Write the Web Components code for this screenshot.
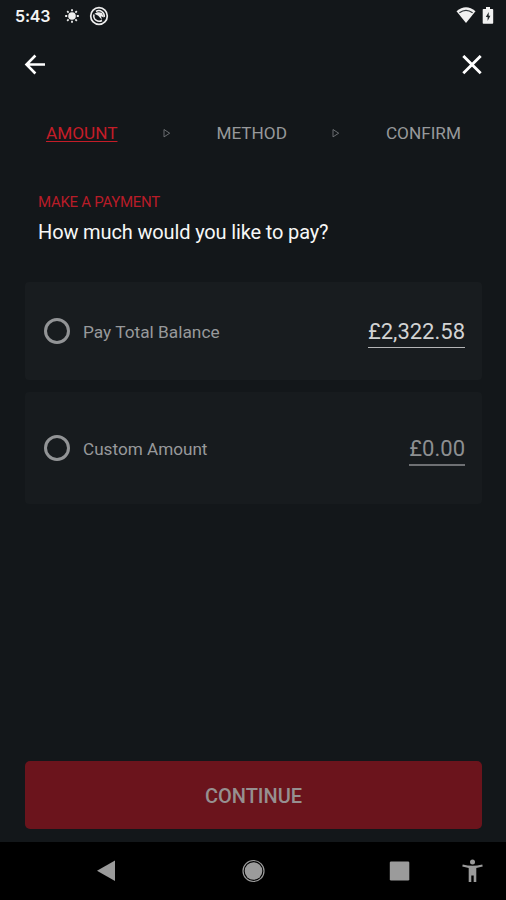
<!DOCTYPE html>
<html lang="en">
<head>
<meta charset="utf-8">
<title>Make a payment</title>
<style>
html,body{margin:0;height:100%;background:#13171a}
body{font-family:Roboto,"Liberation Sans",sans-serif;color:#fff}
</style>
</head>
<body>
<payment-screen></payment-screen>
<script>
const define = (name, html) => {
  const t = document.createElement('template');
  t.innerHTML = html;
  customElements.define(name, class extends HTMLElement {
    constructor() {
      super();
      this.attachShadow({mode: 'open'}).append(t.content.cloneNode(true));
    }
  });
};

define('status-bar', `<style>
:host{display:flex;height:32px;box-sizing:border-box;padding:0 12px 1px 15px;align-items:center;justify-content:space-between}
.l,.r{display:flex;align-items:center}
.t{font:600 16px/32px Inter,sans-serif;letter-spacing:-.15px;color:#f4f4f4;width:49px;white-space:nowrap}
svg{display:block}
.n{margin-left:9px}
.b{margin-left:6px}
</style>
<div class="l"><span class="t">5:43</span>
<svg width="16" height="16" viewBox="0 0 16 16" fill="none" stroke="#eee"><circle cx="8" cy="8" r="3.800" fill="#eee" stroke="none"/><path d="M8 1.200v2M8 12.800v2M1.200 8h2M12.800 8h2M3.200 3.200l1.400 1.400M11.400 11.400l1.400 1.400M3.200 12.800l1.400-1.400M11.400 4.600l1.400-1.400" stroke-width="1.800"/></svg>
<svg class="n" width="20" height="20" viewBox="0 0 20 20" fill="none" stroke="#eee"><circle cx="10" cy="10" r="8.300" stroke-width="1.700"/><path d="M5 8.500A5.400 5.400 0 0 0 13 14.500M15.200 11A5.400 5.400 0 0 0 7 5.500" stroke-width="1.500"/><path d="M5.500 7.800C7.500 5.800 10.500 5.700 13 7L15 11.500 12 10.300 13 14 9.300 9.800Z" fill="#eee" stroke="none"/></svg></div>
<div class="r"><svg width="20" height="17" viewBox="0 0 20 17"><path d="M.5 4.200Q10-3.800 19.500 4.200L10 16Z" fill="#f1f1f1"/><path d="M3.400 5.800Q10 .8 16.600 5.800" stroke="#30363a" stroke-width="1.300" fill="none"/></svg>
<svg class="b" width="12" height="17" viewBox="0 0 12 17"><path d="M4 0h4v2h2.400q.8 0 .8.8V16q0 .8-.8.8H1.500q-.8 0-.8-.8V2.800q0-.8.8-.8H4Z" fill="#f1f1f1"/><path d="M6.700 5 3.800 10h1.800v4l2.800-5.200h-1.700Z" fill="#22272a"/></svg></div>`);

define('nav-header', `<style>
:host{display:flex;height:65px;box-sizing:border-box;padding:0 24px;align-items:center;justify-content:space-between}
svg{display:block}
</style>
<svg width="22" height="22" viewBox="0 0 22 22" fill="none" stroke="#fff" stroke-width="2.600"><path d="M11.400 1.500 2.500 10.500l8.900 9M2.500 10.500H21"/></svg>
<svg width="20" height="20" viewBox="0 0 20 20" fill="none" stroke="#fff" stroke-width="2.800"><path d="M1.300 .9 18.700 18.300M18.700 .9 1.300 18.300"/></svg>`);

define('step-label', `<style>
:host{display:block;font-size:17.200px;line-height:20px;color:#97999b;white-space:nowrap}
:host([active]){color:#c41d28;text-decoration:underline;text-decoration-thickness:1px;text-underline-offset:2px}
</style><slot></slot>`);

define('step-arrow', `<style>:host{display:block}svg{display:block}</style>
<svg width="8" height="9" viewBox="0 0 8 9"><path d="M1 .5 6.700 4.200 1 7.900Z" fill="none" stroke="#74777a" stroke-width=".9"/></svg>`);

define('step-bar', `<style>
:host{display:flex;height:72px;box-sizing:border-box;padding:0 45px 0 46px;align-items:center;justify-content:space-between}
</style><slot></slot>`);

define('page-heading', `<style>
:host{display:block;box-sizing:border-box;padding:24px 38px 0;height:113px}
.k{font-size:15px;line-height:18px;letter-spacing:-.27px;color:#b81c28;white-space:nowrap}
.q{font-size:20px;line-height:24px;letter-spacing:-.14px;margin-top:9px;color:#f7f7f7;white-space:nowrap}
</style><div class="k"><slot name="kicker"></slot></div><div class="q"><slot></slot></div>`);

define('pay-option', `<style>
:host{display:flex;margin:0 24px 0 25px;height:98px;box-sizing:border-box;padding:0 17px 0 19px;align-items:center;background:#181c1f;border-radius:4px;color:#97999b}
:host([tall]){height:112px;margin-top:12px;background:#171b1e}
i{box-sizing:border-box;width:26px;height:26px;border:3px solid #929496;border-radius:50%;margin-right:13px}
.l{font-size:17.300px;line-height:22px;flex:1;padding-top:1px;white-space:nowrap}
.v{font-size:22px;line-height:28px;padding-bottom:1px;margin-top:3px;border-bottom:1px solid #b4b5b6;color:#d2d3d3;white-space:nowrap}
:host([tall]) .l{font-size:17.150px}
:host([tall]) .v{color:#8d8f91;border-bottom:2px solid #6e7073;margin-top:4px}
</style><i></i><span class="l"><slot></slot></span><span class="v"><slot name="value"></slot></span>`);

define('primary-button', `<style>
:host{display:flex;box-sizing:border-box;padding-top:2px;margin:257px 24px 0 25px;height:68px;align-items:center;justify-content:center;background:#6b141c;border-radius:5px;color:#969090;font-size:20px;font-weight:500;line-height:24px}
</style><span><slot></slot></span>`);

define('system-nav', `<style>
:host{display:grid;height:58px;background:#000;margin-top:auto;align-items:center;grid-template-columns:96px 146px 147px 73px 1fr}
svg{display:block}
</style><span></span>
<svg width="20" height="22" viewBox="0 0 20 22"><path d="M19 .5V21L1 10.800Z" fill="#9b9b9b"/></svg>
<svg width="24" height="24" viewBox="0 0 24 24"><circle cx="11.500" cy="12" r="10.500" fill="none" stroke="#9b9b9b" stroke-width="1.200"/><circle cx="11.500" cy="12" r="8.800" fill="#9b9b9b"/></svg>
<svg width="21" height="20" viewBox="0 0 21 20"><rect x=".8" y=".5" width="19.500" height="19" rx="1.300" fill="#9b9b9b"/></svg>
<svg width="22" height="24" viewBox="0 0 22 24" fill="#9b9b9b"><circle cx="10.500" cy="3" r="2.500"/><path d="M.7 5.500Q10.500 8 20.300 5.500L20.700 7.500 14.300 8.900V23H11.700V16.400H9.300V23H6.700V8.900L.3 7.500Z"/></svg>`);

define('payment-screen', `<style>
:host{display:flex;flex-direction:column;width:506px;height:900px;background:#13171a;overflow:hidden}
</style>
<status-bar></status-bar>
<nav-header></nav-header>
<step-bar><step-label active>AMOUNT</step-label><step-arrow></step-arrow><step-label>METHOD</step-label><step-arrow></step-arrow><step-label>CONFIRM</step-label></step-bar>
<page-heading><span slot="kicker">MAKE A PAYMENT</span>How much would you like to pay?</page-heading>
<pay-option>Pay Total Balance<span slot="value">£2,322.58</span></pay-option>
<pay-option tall>Custom Amount<span slot="value">£0.00</span></pay-option>
<primary-button>CONTINUE</primary-button>
<system-nav></system-nav>`);
</script>
</body>
</html>
